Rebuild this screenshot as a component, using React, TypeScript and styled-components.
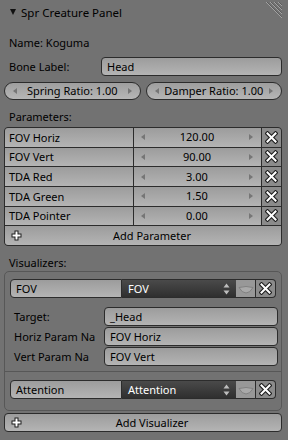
import React from "react";
import styled, { createGlobalStyle } from "styled-components";

const GlobalStyle = createGlobalStyle`
  html, body {
    margin: 0;
    padding: 0;
    background: #727272;
  }
  body {
    font-family: "Noto Sans", "DejaVu Sans", sans-serif;
    font-size: 11px;
    color: #000;
  }
`;

const Panel = styled.div`
  width: 288px;
  height: 440px;
  box-sizing: border-box;
  padding: 0 6px 0 4px;
  display: flex;
  flex-direction: column;
  overflow: hidden;
`;

const Header = styled.div`
  height: 24px;
  display: flex;
  align-items: center;
  padding-left: 6px;
  font-size: 11.5px;
`;

const Triangle = styled.span`
  width: 0;
  height: 0;
  border-left: 3.5px solid transparent;
  border-right: 3.5px solid transparent;
  border-top: 6px solid #111;
  margin-right: 5px;
`;

const Grip = styled.svg`
  margin-left: auto;
  align-self: flex-start;
  margin-top: 2px;
`;

const TextRow = styled.div<{ $top: number; $height: number }>`
  margin-top: ${(p) => p.$top}px;
  height: ${(p) => p.$height}px;
  line-height: ${(p) => p.$height}px;
  padding-left: 5px;
  white-space: nowrap;
`;

const LabelFieldRow = styled.div`
  margin-top: 4px;
  height: 19px;
  display: grid;
  grid-template-columns: 97px 1fr;
  align-items: center;
`;

const Label = styled.div`
  padding-left: 5px;
  white-space: nowrap;
`;

const Field = styled.div<{ $radius?: string }>`
  height: 19px;
  box-sizing: border-box;
  border: 1px solid #2c2c2c;
  border-radius: ${(p) => p.$radius ?? "4px"};
  background: linear-gradient(to bottom, #9c9c9c, #b4b4b4);
  padding-left: 5px;
  line-height: 17px;
  white-space: nowrap;
  overflow: hidden;
`;

const RatioRow = styled.div`
  margin-top: 6px;
  height: 18px;
  display: grid;
  grid-template-columns: 1fr 1fr;
  gap: 5px;
`;

const Pill = styled.div`
  box-sizing: border-box;
  border: 1px solid #2c2c2c;
  border-radius: 9px;
  background: linear-gradient(to bottom, #9e9e9e, #b6b6b6);
  display: flex;
  align-items: center;
  padding: 0 8px;
  white-space: nowrap;
`;

const Arrow = styled.span<{ $dir: "left" | "right" }>`
  width: 0;
  height: 0;
  border-top: 3px solid transparent;
  border-bottom: 3px solid transparent;
  ${(p) =>
    p.$dir === "left"
      ? "border-right: 4px solid #767676;"
      : "border-left: 4px solid #767676;"}
  flex: none;
`;

const SpinText = styled.span`
  flex: 1;
  text-align: center;
  line-height: 16px;
`;

const Table = styled.div`
  margin-top: 1px;
  height: 119px;
  box-sizing: border-box;
  display: grid;
  grid-template-columns: 128px 1fr 19px;
  grid-template-rows: repeat(6, 1fr);
  gap: 1px;
  border: 1px solid #2c2c2c;
  border-radius: 4px;
  background: #2c2c2c;
  overflow: hidden;
`;

const NameCell = styled.div`
  background: linear-gradient(to bottom, #9c9c9c, #b4b4b4);
  padding-left: 4px;
  display: flex;
  align-items: center;
  white-space: nowrap;
`;

const ValueCell = styled.div`
  background: linear-gradient(to bottom, #9c9c9c, #b4b4b4);
  display: flex;
  align-items: center;
  padding: 0 8px 0 7px;
`;

const IconCell = styled.div<{ $bg?: string; $radius?: string }>`
  background: ${(p) => p.$bg ?? "#8b8b8b"};
  display: flex;
  align-items: center;
  justify-content: center;
  box-sizing: border-box;
  border-radius: ${(p) => p.$radius ?? "0"};
`;

const AddButton = styled.div<{ $span?: boolean; $top?: number }>`
  ${(p) => (p.$span ? "grid-column: 1 / -1;" : "")}
  margin-top: ${(p) => p.$top ?? 0}px;
  display: flex;
  align-items: center;
  background: linear-gradient(to bottom, #9c9c9c, #b4b4b4);
  padding-left: 5px;
  white-space: nowrap;
`;

const AddLabel = styled.span`
  flex: 1;
  text-align: center;
`;

const StandaloneAdd = styled(AddButton)`
  height: 19px;
  box-sizing: border-box;
  border: 1px solid #2c2c2c;
  border-radius: 4px;
  padding-left: 5px;
`;

const Box = styled.div`
  border: 1px solid #575757;
  border-radius: 5px;
  display: flex;
  flex-direction: column;
`;

const BoxSection = styled.div<{ $top: number; $bottom: number }>`
  padding: ${(p) => p.$top}px 5px ${(p) => p.$bottom}px;
  & + & {
    border-top: 1px solid #575757;
  }
`;

const VisRow = styled.div`
  height: 19px;
  display: grid;
  grid-template-columns: 112px 1fr 20px 20px;
`;

const Dropdown = styled.div`
  box-sizing: border-box;
  border-top: 1px solid #2c2c2c;
  border-bottom: 1px solid #2c2c2c;
  background: linear-gradient(to bottom, #4a4a4a, #2f2f2f);
  color: #fff;
  display: flex;
  align-items: center;
  padding: 0 6px;
  white-space: nowrap;
`;

const DropText = styled.span`
  flex: 1;
`;

const EdgeButton = styled(IconCell)`
  border: 1px solid #2c2c2c;
  border-left: none;
`;

const ParamGrid = styled.div`
  margin-top: 9px;
  margin-right: -2px;
  display: grid;
  grid-template-columns: 94px 1fr;
  row-gap: 1px;
`;

const ParamLabel = styled.div`
  padding-left: 4px;
  line-height: 19px;
  white-space: nowrap;
  overflow: hidden;
`;

const XIcon: React.FC = () => (
  <svg width="13" height="13" viewBox="0 0 13 13">
    <path d="M2.5 2.5 L10.5 10.5 M10.5 2.5 L2.5 10.5" stroke="#1e1e1e" strokeWidth="4.2" strokeLinecap="square" />
    <path d="M2.5 2.5 L10.5 10.5 M10.5 2.5 L2.5 10.5" stroke="#fff" strokeWidth="2" strokeLinecap="square" />
  </svg>
);

const PlusIcon: React.FC = () => (
  <svg width="13" height="13" viewBox="0 0 13 13">
    <path d="M6.5 1.5 V11.5 M1.5 6.5 H11.5" stroke="#1e1e1e" strokeWidth="4" />
    <path d="M6.5 2.5 V10.5 M2.5 6.5 H10.5" stroke="#fff" strokeWidth="2" />
  </svg>
);

const UpDown: React.FC = () => (
  <svg width="7" height="12" viewBox="0 0 7 12">
    <path d="M3.5 0.5 L6.5 4.5 H0.5 Z" fill="#bdbdbd" />
    <path d="M3.5 11.5 L6.5 7.5 H0.5 Z" fill="#bdbdbd" />
  </svg>
);

const ClosedEye: React.FC = () => (
  <svg width="16" height="10" viewBox="0 0 16 10">
    <path d="M1 3.5 Q8 1.5 15 3.5 Q12 9 8 9 Q4 9 1 3.5 Z" fill="#a9a9a9" stroke="#808080" strokeWidth="1" />
  </svg>
);

const params = [
  { name: "FOV Horiz", value: "120.00" },
  { name: "FOV Vert", value: "90.00" },
  { name: "TDA Red", value: "3.00" },
  { name: "TDA Green", value: "1.50" },
  { name: "TDA Pointer", value: "0.00" },
];

const App: React.FC = () => {
  return (
    <>
      <GlobalStyle />
      <Panel>
        <Header>
          <Triangle />
          Spr Creature Panel
          <Grip width="16" height="16" viewBox="0 0 16 16">
            {[0, 4, 8, 12].map((a) => (
              <g key={a}>
                <line x1={a + 1} y1={0} x2={16} y2={15 - a} stroke="#5c5c5c" strokeWidth="1" />
                <line x1={a} y1={0} x2={16} y2={16 - a} stroke="#a2a2a2" strokeWidth="1" />
              </g>
            ))}
          </Grip>
        </Header>

        <TextRow $top={9} $height={20}>Name: Koguma</TextRow>

        <LabelFieldRow>
          <Label>Bone Label:</Label>
          <Field>Head</Field>
        </LabelFieldRow>

        <RatioRow>
          <Pill>
            <Arrow $dir="left" />
            <SpinText>Spring Ratio: 1.00</SpinText>
            <Arrow $dir="right" />
          </Pill>
          <Pill>
            <Arrow $dir="left" />
            <SpinText>Damper Ratio: 1.00</SpinText>
            <Arrow $dir="right" />
          </Pill>
        </RatioRow>

        <TextRow $top={8} $height={18}>Parameters:</TextRow>

        <Table>
          {params.map((p) => (
            <React.Fragment key={p.name}>
              <NameCell>{p.name}</NameCell>
              <ValueCell>
                <Arrow $dir="left" />
                <SpinText>{p.value}</SpinText>
                <Arrow $dir="right" />
              </ValueCell>
              <IconCell>
                <XIcon />
              </IconCell>
            </React.Fragment>
          ))}
          <AddButton $span>
            <PlusIcon />
            <AddLabel>Add Parameter</AddLabel>
          </AddButton>
        </Table>

        <TextRow $top={9} $height={16}>Visualizers:</TextRow>

        <Box>
          <BoxSection $top={7} $bottom={5}>
            <VisRow>
              <Field $radius="4px 0 0 4px">FOV</Field>
              <Dropdown>
                <DropText>FOV</DropText>
                <UpDown />
              </Dropdown>
              <EdgeButton $bg="#989898">
                <ClosedEye />
              </EdgeButton>
              <EdgeButton $radius="0 4px 4px 0">
                <XIcon />
              </EdgeButton>
            </VisRow>
            <ParamGrid>
              <ParamLabel>Target:</ParamLabel>
              <Field>_Head</Field>
              <ParamLabel>Horiz Param Na</ParamLabel>
              <Field>FOV Horiz</Field>
              <ParamLabel>Vert Param Na</ParamLabel>
              <Field>FOV Vert</Field>
            </ParamGrid>
          </BoxSection>
          <BoxSection $top={8} $bottom={11}>
            <VisRow>
              <Field $radius="4px 0 0 4px">Attention</Field>
              <Dropdown>
                <DropText>Attention</DropText>
                <UpDown />
              </Dropdown>
              <EdgeButton $bg="#989898">
                <ClosedEye />
              </EdgeButton>
              <EdgeButton $radius="0 4px 4px 0">
                <XIcon />
              </EdgeButton>
            </VisRow>
          </BoxSection>
        </Box>

        <StandaloneAdd $top={2}>
          <PlusIcon />
          <AddLabel>Add Visualizer</AddLabel>
        </StandaloneAdd>
      </Panel>
    </>
  );
};

export default App;
